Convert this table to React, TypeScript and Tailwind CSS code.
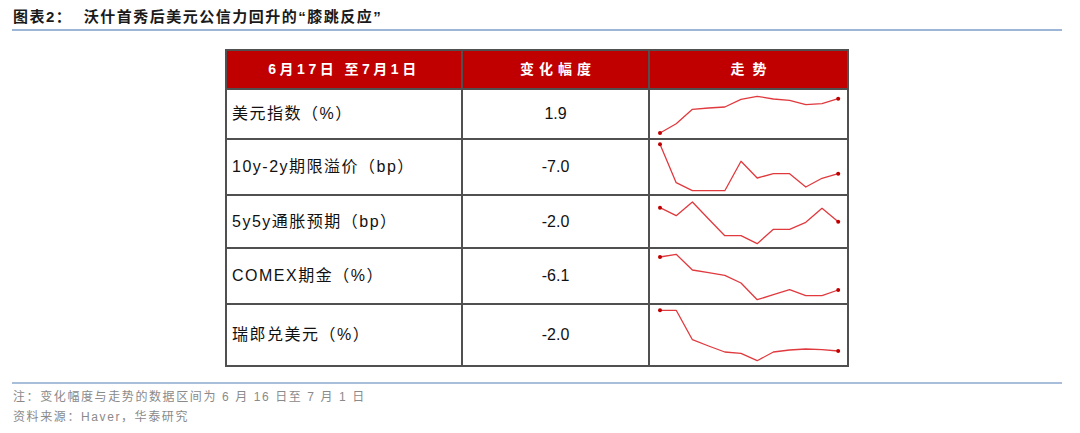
const cjk = "font-['Liberation_Sans','Noto_Sans_CJK_SC',sans-serif]";

// 折线的纵坐标（相对各行顶部，像素）
const rows = [
  {
    label: "美元指数（%）",
    value: "1.9",
    h: 50,
    ys: [43, 33.7, 19.3, 18, 17, 9.3, 6.3, 9, 10.3, 14.7, 13.7, 8.7],
  },
  {
    label: "10y-2y期限溢价（bp）",
    value: "-7.0",
    h: 56,
    ys: [4.3, 42.7, 50.7, 50.7, 50.7, 21.3, 38, 33.7, 33.7, 47, 38.3, 33.7],
  },
  {
    label: "5y5y通胀预期（bp）",
    value: "-2.0",
    h: 53,
    ys: [11.7, 19.7, 6, 23, 39.7, 39.7, 47.7, 33.3, 33.3, 26.3, 12.3, 25.7],
  },
  {
    label: "COMEX期金（%）",
    value: "-6.1",
    h: 56,
    ys: [8, 5.3, 21, 23.7, 26.3, 34, 50.7, 45.7, 40.7, 46.7, 46.7, 41],
  },
  {
    label: "瑞郎兑美元（%）",
    value: "-2.0",
    h: 62,
    ys: [5.3, 5.3, 34.7, 41, 47, 48.3, 55.7, 47, 45, 44, 44.7, 46],
  },
];

function Spark({ ys, h }: { ys: number[]; h: number }) {
  const pts = ys.map((y, i) => [10 + i * 16.2, y]);
  const d = pts.map((p) => p.join(",")).join(" ");
  const last = pts[pts.length - 1];
  return (
    <svg width={197} height={h} className="block">
      <polyline points={d} fill="none" stroke="#e0393e" strokeWidth={1.3} strokeLinejoin="round" />
      <circle cx={pts[0][0]} cy={pts[0][1]} r={2} fill="#c00000" />
      <circle cx={last[0]} cy={last[1]} r={2} fill="#c00000" />
    </svg>
  );
}

export default function App() {
  return (
    <div className={`w-[1080px] h-[433px] bg-white ${cjk} relative`}>
      {/* 标题 */}
      <div className="pl-[13px] pt-[8px] h-[29px] text-[15px] font-bold text-[#1a1a1a] leading-[18px] tracking-[1.5px]">
        图表2：&nbsp;&nbsp;沃什首秀后美元公信力回升的“膝跳反应”
      </div>
      <div className="ml-[12px] w-[1050px] h-[2px] bg-[#9db6d6]" />

      {/* 表格 */}
      <div className="mt-[18px] ml-[225px]">
        <table className="border-collapse border-2 border-[#505050]">
          <thead>
            <tr className="h-[39px] bg-[#c00000] text-white text-[14px] font-bold">
              <th className="w-[236px] border-2 border-[#505050] p-0 tracking-[3.5px]">6月17日 至7月1日</th>
              <th className="w-[187px] border-2 border-[#505050] p-0 tracking-[5px] pl-[5px]">变化幅度</th>
              <th className="w-[199px] border-2 border-[#505050] p-0 tracking-[8px] pl-[8px]">走势</th>
            </tr>
          </thead>
          <tbody>
            {rows.map((r) => (
              <tr key={r.label} style={{ height: r.h }}>
                <td className="border-2 border-[#505050] pl-[5px] text-[16px] text-[#111] tracking-[1.5px]">
                  {r.label}
                </td>
                <td className="border-2 border-[#505050] text-center text-[16px] text-[#111]">
                  {r.value}
                </td>
                <td className="border-2 border-[#505050] p-0 align-top">
                  <Spark ys={r.ys} h={r.h - 2} />
                </td>
              </tr>
            ))}
          </tbody>
        </table>
      </div>

      {/* 脚注 */}
      <div className="absolute left-[12px] top-[382px] w-[1050px] h-[2px] bg-[#a9bedb]" />
      <div className="absolute left-[13px] top-[389px] text-[12px] leading-[16px] text-[#8a8a8a] tracking-[1.6px]">
        注：变化幅度与走势的数据区间为 6 月 16 日至 7 月 1 日
      </div>
      <div className="absolute left-[13px] top-[409px] text-[12px] leading-[16px] text-[#8a8a8a] tracking-[1.6px]">
        资料来源：Haver，华泰研究
      </div>
    </div>
  );
}
